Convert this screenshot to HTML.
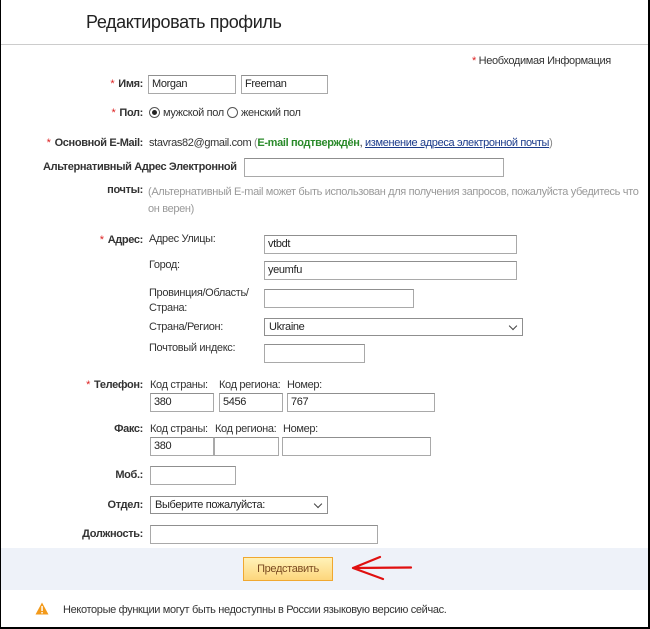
<!DOCTYPE html>
<html><head><meta charset="utf-8"><style>
*{margin:0;padding:0;box-sizing:border-box}
body{width:650px;height:629px;position:relative;background:#fff;font-family:"Liberation Sans","Noto Sans CJK SC",sans-serif;font-size:11px;letter-spacing:-0.35px;color:#333;overflow:hidden}
.a{position:absolute;white-space:nowrap;line-height:13px}
.l{position:absolute;right:507px;white-space:nowrap;line-height:13px;font-weight:bold;color:#333}
.r{color:#d22;font-weight:normal;margin-right:4px}
.i{position:absolute;border:1px solid #a9a9a9;border-top-color:#8f8f8f;background:#fff;font-size:11px;line-height:16px;padding-left:3px;color:#222}
.s{position:absolute;border:1px solid #8f8f8f;background:#fff;line-height:16px;padding-left:4px;color:#222}
.s:after{content:"";position:absolute;right:6px;top:4px;width:5px;height:5px;border-right:1px solid #444;border-bottom:1px solid #444;transform:rotate(45deg)}
.g{color:#999}
</style></head><body>
<div style="position:absolute;left:0;top:0;width:1px;height:629px;background:#000"></div>
<div style="position:absolute;left:648px;top:0;width:2px;height:629px;background:#000"></div>
<div style="position:absolute;left:0;top:627px;width:650px;height:2px;background:#000"></div>
<div class="a" style="left:86px;top:11px;font-size:18px;letter-spacing:-0.4px;line-height:22px;color:#222">Редактировать профиль</div>
<div style="position:absolute;left:1px;top:44px;width:647px;height:1px;background:#ccc"></div>
<div class="a" style="left:472px;top:55px"><span style="color:#d22">*</span> Необходимая Информация</div>

<div class="l" style="top:78px"><span class="r">*</span>Имя:</div>
<div class="i" style="left:148px;top:75px;width:88px;height:19px">Morgan</div>
<div class="i" style="left:241px;top:75px;width:87px;height:19px">Freeman</div>

<div class="l" style="top:107px"><span class="r">*</span>Пол:</div>
<div style="position:absolute;left:149px;top:107px;width:11px;height:11px;border:1px solid #555;border-radius:50%"><div style="width:5px;height:5px;background:#222;border-radius:50%;margin:2px"></div></div>
<div class="a" style="left:163px;top:107px">мужской пол</div>
<div style="position:absolute;left:227px;top:107px;width:11px;height:11px;border:1px solid #555;border-radius:50%"></div>
<div class="a" style="left:241px;top:107px">женский пол</div>

<div class="l" style="top:137px"><span class="r">*</span>Основной E-Mail:</div>
<div class="a" style="left:149px;top:137px">stavras82@gmail.com <span style="color:#888">(</span><b style="color:#2a8a2a">E-mail подтверждён</b>, <u style="color:#1a3a8a">изменение адреса электронной почты</u><span style="color:#888">)</span></div>

<div class="a" style="left:43px;top:161px;font-weight:bold">Альтернативный Адрес Электронной</div>
<div class="i" style="left:244px;top:158px;width:260px;height:19px"></div>
<div class="l" style="top:184px">почты:</div>
<div class="a g" style="left:148px;top:184px;line-height:17px">(Альтернативный E-mail может быть использован для получения запросов, пожалуйста убедитесь что<br>он верен)</div>

<div class="l" style="top:234px"><span class="r">*</span>Адрес:</div>
<div class="a" style="left:149px;top:233px">Адрес Улицы:</div>
<div class="i" style="left:264px;top:235px;width:253px;height:19px">vtbdt</div>
<div class="a" style="left:149px;top:259px">Город:</div>
<div class="i" style="left:264px;top:261px;width:253px;height:19px">yeumfu</div>
<div class="a" style="left:149px;top:286px;line-height:15px">Провинция/Область/<br>Страна:</div>
<div class="i" style="left:264px;top:289px;width:150px;height:19px"></div>
<div class="a" style="left:149px;top:321px">Страна/Регион:</div>
<div class="s" style="left:264px;top:318px;width:259px;height:18px">Ukraine</div>
<div class="a" style="left:149px;top:342px">Почтовый индекс:</div>
<div class="i" style="left:264px;top:344px;width:101px;height:19px"></div>

<div class="l" style="top:379px"><span class="r">*</span>Телефон:</div>
<div class="a" style="left:150px;top:379px">Код страны:</div>
<div class="a" style="left:219px;top:379px">Код региона:</div>
<div class="a" style="left:287px;top:379px">Номер:</div>
<div class="i" style="left:150px;top:393px;width:64px;height:19px">380</div>
<div class="i" style="left:219px;top:393px;width:64px;height:19px">5456</div>
<div class="i" style="left:287px;top:393px;width:148px;height:19px">767</div>

<div class="l" style="top:423px">Факс:</div>
<div class="a" style="left:150px;top:423px">Код страны:</div>
<div class="a" style="left:215px;top:423px">Код региона:</div>
<div class="a" style="left:283px;top:423px">Номер:</div>
<div class="i" style="left:150px;top:437px;width:64px;height:19px">380</div>
<div class="i" style="left:214px;top:437px;width:65px;height:19px"></div>
<div class="i" style="left:282px;top:437px;width:149px;height:19px"></div>

<div class="l" style="top:469px">Моб.:</div>
<div class="i" style="left:150px;top:466px;width:86px;height:19px"></div>
<div class="l" style="top:499px">Отдел:</div>
<div class="s" style="left:150px;top:496px;width:178px;height:18px">Выберите пожалуйста:</div>
<div class="l" style="top:528px">Должность:</div>
<div class="i" style="left:150px;top:525px;width:228px;height:19px"></div>

<div style="position:absolute;left:1px;top:548px;width:647px;height:42px;background:#eef2f9"></div>
<div style="position:absolute;left:243px;top:557px;width:90px;height:24px;border:1px solid #f0a830;background:linear-gradient(#fff2b8,#fdd67c);text-align:center;line-height:22px;color:#7a4a20">Представить</div>
<svg style="position:absolute;left:348px;top:553px" width="68" height="30"><path d="M63 14.5 L5 15 M5 15 L32 4 M5 15 L35 26" stroke="#e01010" stroke-width="2.2" fill="none" stroke-linecap="round"/></svg>

<svg style="position:absolute;left:35px;top:602px" width="14" height="13"><path d="M7 0.5 L13.5 12.5 L0.5 12.5 Z" fill="#f39a1a"/><rect x="6.3" y="4" width="1.5" height="5" fill="#fff"/><rect x="6.3" y="10" width="1.5" height="1.5" fill="#fff"/></svg>
<div class="a" style="left:63px;top:604px">Некоторые функции могут быть недоступны в России языковую версию сейчас.</div>
</body></html>
